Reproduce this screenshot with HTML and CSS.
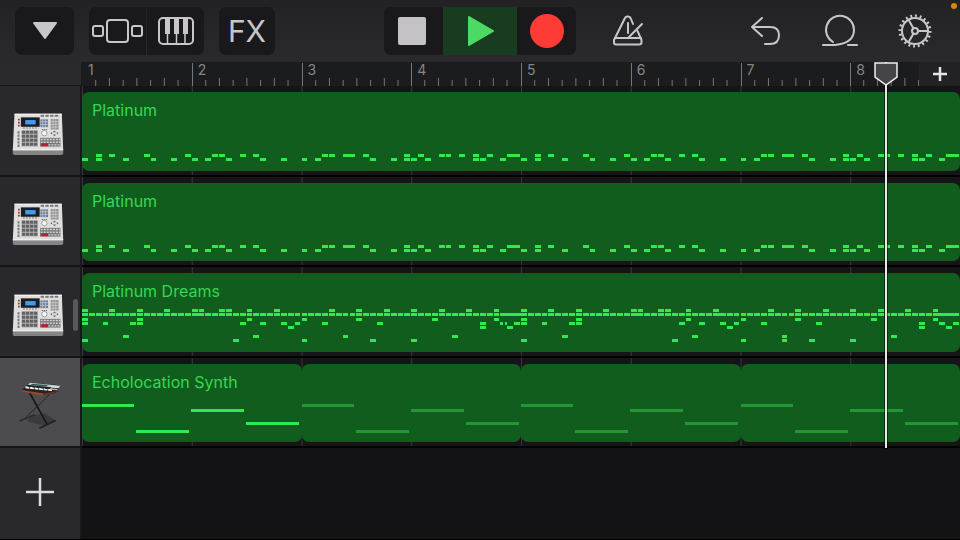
FILE: index.html
```html
<!DOCTYPE html>
<html lang="en">
<head>
    <meta charset="UTF-8">
    <meta name="viewport" content="width=device-width, initial-scale=1">
    <title>Tracks</title>
    <link rel="stylesheet" href="styles.css">
</head>
<body>
    <!-- shared track icon -->
    <svg class="symbols" aria-hidden="true">
        <symbol id="drum-machine" viewBox="36 70 154 128">
            <path d="M38 180H188V190Q188 195 183 195H43Q38 195 38 190Z" fill="#858585"/>
            <path d="M43 72H184L188 181H38Z" fill="#dededc"/>
            <path d="M43 72H184V75H43Z" fill="#f8f8f8"/>
            <path d="M38 178H188V181H38Z" fill="#f2f2f2"/>
            <rect x="62" y="83" width="56" height="28" fill="#1c1c20"/>
            <rect x="75" y="91" width="31" height="13" fill="#3f9cf5"/>
            <path d="M56 87V110" stroke="#8c3434" stroke-width="5" stroke-dasharray="5 4"/>
            <path d="M121 78H174" stroke="#77777a" stroke-width="6" stroke-dasharray="10 4"/>
            <rect x="120" y="89" width="23" height="23" fill="#6f7f96"/>
            <path d="M120 96H143M120 104H143M127 89V112M135 89V112" stroke="#c9d0da" stroke-width="2"/>
            <rect x="151" y="88" width="23" height="31" fill="#8d8d92"/>
            <path d="M151 96H174M151 104H174M151 112H174M158 88V119M166 88V119" stroke="#dadada" stroke-width="2"/>
            <path d="M68 115H114" stroke="#77777a" stroke-width="3" stroke-dasharray="6 3"/>
            <rect x="64" y="121" width="49" height="49" fill="#b4b4b4"/>
            <path d="M65 127H112M65 139H112M65 151H112M65 163H112" stroke="#626266" stroke-width="9" stroke-dasharray="10 2"/>
            <path d="M55 124V172" stroke="#77777a" stroke-width="6" stroke-dasharray="7 3"/>
            <circle cx="132" cy="130" r="8" fill="#f7f7f7" stroke="#77777a" stroke-width="2"/>
            <path d="M124 119H140" stroke="#77777a" stroke-width="3" stroke-dasharray="4 2"/>
            <path d="M162 122L167 127H157ZM162 139L167 134H157ZM150 130L155 126V134ZM174 130L169 126V134Z" fill="#68686c"/>
            <rect x="119" y="144" width="61" height="26" fill="#77777a"/>
            <path d="M121 149H180M121 157H180M144 165H180" stroke="#cfcfcf" stroke-width="4" stroke-dasharray="6 3"/>
            <rect x="123" y="160" width="20" height="9" fill="#b81f35"/>
        </symbol>
    </svg>

    <header class="toolbar">
        <div class="toolbar-left">
            <button class="tool tool-menu" aria-label="Browser">
                <svg width="26" height="20" viewBox="0 0 26 20"><path d="M2 2H24L13 17Z" fill="#c8c6c9" stroke="#c8c6c9" stroke-width="2" stroke-linejoin="round"/></svg>
            </button>
            <div class="tool-group">
                <button class="tool" aria-label="Sound browser">
                    <svg class="line-icon" width="52" height="26" viewBox="0 0 52 26"><rect x="15" y="2" width="21" height="22" rx="3"/><rect x="1" y="8" width="10" height="10" rx="2"/><rect x="40" y="8" width="10" height="10" rx="2"/></svg>
                </button>
                <button class="tool" aria-label="Instrument">
                    <svg class="line-icon" width="38" height="30" viewBox="0 0 38 30"><rect x="2" y="2" width="34" height="26" rx="4"/><path d="M10.5 17V28M19.5 17V28M28 17V28" stroke-width="1.5"/><path d="M8 2H13V18H8ZM17 2H22V18H17ZM26 2H31V18H26Z" fill="#c8c6c9" stroke="none"/></svg>
                </button>
            </div>
            <button class="tool tool-fx">FX</button>
        </div>

        <div class="transport">
            <button class="stop" aria-label="Stop"><span class="stop-shape"></span></button>
            <button class="play" aria-label="Play">
                <svg width="28" height="32" viewBox="0 0 28 32"><path d="M3 2L27 16L3 30Z" fill="#4cda64" stroke="#4cda64" stroke-width="2" stroke-linejoin="round"/></svg>
            </button>
            <button class="record" aria-label="Record"><span class="record-shape"></span></button>
        </div>

        <div class="toolbar-right">
            <button class="plain metronome" aria-label="Metronome">
                <svg class="line-icon" width="32" height="32" viewBox="0 0 32 32"><path d="M21 9L19 4Q18 1.500 16 1.500H15.500Q13.500 1.500 12.500 4L2 25V27.500Q2 29.500 4 29.500H27Q29.500 29.500 29.500 27.500V25L25.500 16"/><path d="M3 23H29M16 8V18M30 9L17 22"/></svg>
            </button>
            <div class="toolbar-end">
                <button class="plain" aria-label="Undo">
                    <svg class="line-icon" width="32" height="32" viewBox="0 0 32 32"><path d="M13 3L3 12L13 21M3 12H21Q30 12 30 20Q30 29 21 29H16"/></svg>
                </button>
                <button class="plain" aria-label="Loop browser">
                    <svg class="line-icon" width="36" height="34" viewBox="0 0 36 34"><path d="M1 31H13Q32 29 32 16A14 14 0 1 0 11 28M26 31H35"/></svg>
                </button>
                <button class="plain" aria-label="Settings">
                    <svg class="line-icon" width="36" height="36" viewBox="0 0 36 36"><circle cx="18" cy="18" r="13"/><circle cx="18" cy="18" r="15" pathLength="100" stroke-width="3" stroke-dasharray="2 3" stroke-linecap="butt"/><circle cx="18" cy="18" r="3"/><path d="M21 18H31M16.5 15.400L11.5 6.700M16.5 20.600L11.5 29.300"/></svg>
                </button>
            </div>
        </div>
        <span class="mic-dot"></span>
    </header>

    <main class="arrange">
        <div class="ruler-corner"></div>
        <div class="ruler">
            <div class="bars" id="bars"></div>
            <button class="add-section" aria-label="Add section">
                <svg width="16" height="16" viewBox="0 0 16 16"><path d="M8 1V15M1 8H15" stroke="#e4e4e6" stroke-width="2.5"/></svg>
            </button>
        </div>

        <button class="track-head" aria-label="Platinum"><svg class="drum-icon"><use href="#drum-machine"/></svg></button>
        <div class="lane">
            <section class="region"><h2>Platinum</h2><svg class="notes" data-part="platinum" data-steps="128"></svg></section>
        </div>

        <button class="track-head" aria-label="Platinum"><svg class="drum-icon"><use href="#drum-machine"/></svg></button>
        <div class="lane">
            <section class="region"><h2>Platinum</h2><svg class="notes" data-part="platinum" data-steps="128"></svg></section>
        </div>

        <button class="track-head" aria-label="Platinum Dreams"><svg class="drum-icon"><use href="#drum-machine"/></svg><span class="drag-handle"></span></button>
        <div class="lane">
            <section class="region"><h2>Platinum Dreams</h2><svg class="notes" data-part="dreams" data-steps="128"></svg></section>
        </div>

        <button class="track-head selected" aria-label="Echolocation Synth">
            <svg class="synth-icon" viewBox="50 334 132 148">
                <path d="M84 440L132 432L166 454L130 470L80 458Z" fill="#3b3b3f"/>
                <path d="M147 374L72 447" stroke="#242427" stroke-width="3"/>
                <path d="M54 456L102 436" stroke="#29292c" stroke-width="4"/>
                <path d="M83 364L139 465" stroke="#151517" stroke-width="5"/>
                <path d="M116 478L166 454" stroke="#202023" stroke-width="5"/>
                <path d="M62 360L87 338L180 346L166 370L128 376Z" fill="#242427"/>
                <path d="M63 361L130 371L127 378L63 366Z" fill="#9b4626"/>
                <path d="M131 371L164 364L177 360L174 366L129 378Z" fill="#6f321f"/>
                <path d="M87 338L180 347L175 354L80 344Z" fill="#c4d0ce"/>
                <path d="M93 341L141 345L137 350L89 345Z" fill="#35575a"/>
                <path d="M73 352L156 361" stroke="#f0f0f0" stroke-width="6" stroke-dasharray="12 2"/>
                <path d="M81 349L159 357" stroke="#202023" stroke-width="4" stroke-dasharray="8 5"/>
                <path d="M151 351L174 353M148 357L171 359" stroke="#eee" stroke-width="3"/>
            </svg>
        </button>
        <div class="lane">
            <section class="region"><h2>Echolocation Synth</h2><svg class="notes" data-part="echo" data-steps="32"></svg></section>
            <section class="region looped"><svg class="notes" data-part="echo" data-steps="32"></svg></section>
            <section class="region looped"><svg class="notes" data-part="echo" data-steps="32"></svg></section>
            <section class="region looped"><svg class="notes" data-part="echo" data-steps="32"></svg></section>
        </div>

        <button class="track-head add-track" aria-label="Add track">
            <svg width="30" height="30" viewBox="0 0 30 30"><path d="M15 1V29M1 15H29" stroke="#dcdcde" stroke-width="2.5"/></svg>
        </button>
        <div class="empty"></div>

        <div class="playhead">
            <svg width="24" height="24" viewBox="0 0 24 24"><path d="M1 1H23V15L12 23L1 15Z" fill="#454548" stroke="#eee" stroke-width="1.5"/></svg>
        </div>
    </main>

    <script src="script.js"></script>
</body>
</html>
```

FILE: styles.css
```css
* {
    box-sizing: border-box;
}

body {
    margin: 0;
    min-height: 100vh;
    display: flex;
    flex-direction: column;
    background-color: #000;
    font-family: Inter, "Liberation Sans", sans-serif;
    padding-bottom: 1px;
}

button {
    display: flex;
    align-items: center;
    justify-content: center;
    margin: 0;
    padding: 0;
    border: none;
    background: none;
    color: inherit;
    font-family: inherit;
    cursor: pointer;
}

.symbols {
    position: absolute;
    width: 0;
    height: 0;
}

.line-icon {
    fill: none;
    stroke: #c8c6c9;
    stroke-width: 2;
    stroke-linecap: round;
    stroke-linejoin: round;
}

/* toolbar */

.toolbar {
    position: relative;
    display: grid;
    grid-template-columns: 1fr auto 1fr;
    align-items: center;
    height: 62px;
    background: linear-gradient(#222224, #2a2a2d);
}

.toolbar-left {
    display: flex;
    gap: 15px;
    padding-left: 15px;
}

.tool {
    width: 57px;
    height: 48px;
    background-color: #19191b;
}

.tool-menu {
    width: 59px;
    border-radius: 7px;
}

.tool-group {
    display: flex;
    gap: 1px;
    border-radius: 7px;
    overflow: hidden;
}

.tool-fx {
    width: 56px;
    border-radius: 7px;
    color: #c8c6c9;
    font-size: 30px;
    font-weight: 400;
}

.transport {
    display: flex;
    height: 48px;
    border-radius: 7px;
    overflow: hidden;
    background-color: #19191b;
}

.stop, .record {
    width: 59px;
}

.play {
    width: 74px;
    background-color: #193c20;
}

.stop-shape {
    width: 28px;
    height: 28px;
    margin-right: 4px;
    border-radius: 2px;
    background-color: #c5c2c6;
}

.record-shape {
    width: 34px;
    height: 34px;
    border-radius: 50%;
    background-color: #ff3b35;
}

.toolbar-right, .toolbar-end {
    display: flex;
}

.toolbar-right {
    justify-content: space-between;
    padding: 0 25px 0 32px;
}

.toolbar-end {
    gap: 35px;
}

.plain {
    width: 40px;
    height: 48px;
}

.mic-dot {
    position: absolute;
    top: 3px;
    right: 3px;
    width: 6px;
    height: 6px;
    border-radius: 50%;
    background-color: #d9860c;
}

/* ruler and tracks */

.arrange {
    position: relative;
    flex: 1;
    display: grid;
    grid-template-columns: 82px 1fr;
    grid-template-rows: 24px repeat(5, minmax(90px, 1fr));
    overflow: hidden;
}

.ruler-corner {
    background-color: #2a2a2c;
    border-right: 1px solid #1b1c1e;
    border-bottom: 1px solid #151517;
}

.ruler {
    display: grid;
    background-color: #1b1c1e;
}

.bars, .add-section {
    grid-area: 1 / 1;
}

.bars {
    display: grid;
    grid-template-columns: repeat(8, 1fr);
}

.bar {
    display: grid;
    color: #858587;
    font-size: 14px;
    line-height: 16px;
}

.bar span, .bar svg {
    grid-area: 1 / 1;
}

.bar span {
    padding-left: 6px;
}

.bar svg {
    width: 100%;
    height: 24px;
}

.bar line {
    stroke: #77777a;
}

.bar:first-child .bar-line {
    display: none;
}

.add-section {
    justify-self: end;
    width: 41px;
    background-color: #222224;
    z-index: 1;
}

.track-head {
    position: relative;
    padding: 8px 4px 0 0;
    background-color: #29292d;
    border-right: 2px solid #18181b;
    border-bottom: 2px solid #151517;
}

.selected {
    padding: 6px 2px 0 0;
    background-color: #4b4b50;
}

.add-track {
    padding: 0 0 4px;
    border-bottom: none;
}

.drum-icon {
    width: 52px;
    height: 43px;
}

.synth-icon {
    width: 43px;
    height: 49px;
}

.drag-handle {
    position: absolute;
    right: 2px;
    width: 5px;
    height: 32px;
    border-radius: 3px;
    background-color: #58585c;
}

.lane {
    display: flex;
    padding: 6px 0 4px;
    border-bottom: 2px solid #000;
    background-color: #151518;
    background-image: linear-gradient(to right, #39393d 1px, transparent 1px);
    background-size: 12.5% 100%;
}

.region {
    position: relative;
    flex: 1;
    min-width: 0;
    border-radius: 7px;
    overflow: hidden;
    background-color: #115d1d;
}

.region h2 {
    margin: 0;
    padding: 8px 10px;
    color: #34d855;
    font-size: 16px;
    font-weight: 400;
    line-height: 20px;
}

.notes {
    position: absolute;
    top: 0;
    left: 0;
    width: 100%;
    height: 100%;
    fill: #31e94f;
    shape-rendering: crispEdges;
}

.looped .notes {
    fill: #239736;
}

.empty {
    background-color: #131316;
}

.playhead {
    position: absolute;
    grid-column: 2;
    grid-row: 1 / 6;
    top: 0;
    bottom: 0;
    left: 91.5%;
    z-index: 2;
    width: 2px;
    background-color: #e8e8e8;
    box-shadow: 0 0 0 1px rgba(0, 0, 0, 0.5);
}

.playhead svg {
    display: block;
    margin-left: -11px;
}
```

FILE: script.js
```js
// y of each pitch row inside a region
const rowY = [36, 40, 45, 49, 53, 58, 62, 66];

// step numbers for each row, [step, length] for longer notes
const parts = {
    platinum: {
        6: [2, 4, 9, 15, 19, 20, 23, 25, 35, 36, [38, 2], 41, 47, 49, 52, 53, 55, 57, 59, [62, 2], 66, 68, 73, 79, 83, 84, 87, 89, 99, 100, [102, 2], 105, 111, 113, 116, 117, 119, 121, 123, [126, 2]],
        7: [0, 2, 6, 10, 13, 16, 18, 21, 26, 29, 32, 34, 42, 45, 47, 48, 50, 57, 58, 61, 64, 66, 70, 74, 77, 80, 82, 85, 90, 93, 96, 98, 106, 109, 111, 112, 114, 121, 122, 125]
    },
    dreams: {
        0: [0, 4, 8, 12, 16, 17, 20, 21, 24, 28, 36, 40, 44, 48, 52, 56, 60, 64, 68, 72, 76, 80, 81, 84, 85, 88, 92, 100, 104, 108, 112, 116, 120, 124],
        1: [],
        2: [0, 8, 24, 32, 40, 51, 60, 64, 72, 88, 96, 104, 115, 124],
        3: [0, 3, 7, 8, 23, 26, 29, 31, 35, 43, 58, [61, 0.5], [61.6, 0.5], 63, 64, 67, 71, 72, 87, 90, 93, 95, 99, 107, 122, 125, 127],
        4: [30, 58, 62, 94, 122, 126],
        6: [6, 25, 38, 54, 70, 89, 102, 118],
        7: [0, 22, 32, 42, 48, 64, 86, 96, 102, 106, 112]
    },
    echo: {
        1: [[0, 7.8]],
        2: [[15.9, 7.9]],
        5: [[23.9, 7.9]],
        7: [[7.8, 7.9]]
    }
};

// the hi-hat row plays on every step, a few of them tied
const ties = { 16: 2, 61: 4, 80: 2, 92: 2, 124: 4 };
for (let step = 0; step < 128; step += ties[step] || 1) {
    parts.dreams[1].push(ties[step] ? [step, ties[step]] : step);
}

function renderNotes(svg) {
    const steps = Number(svg.dataset.steps);
    const part = parts[svg.dataset.part];
    let html = '';
    for (const row in part) {
        for (const note of part[row]) {
            const [start, length] = Array.isArray(note) ? note : [note, 1];
            const x = start / steps * 100;
            const width = Math.max(length - 0.15, 0.4) / steps * 100;
            html += `<rect x="${x}%" y="${rowY[row]}" width="${width}%" height="3"/>`;
        }
    }
    svg.innerHTML = html;
}

function renderBars() {
    let html = '';
    for (let bar = 1; bar <= 8; bar++) {
        let ticks = '<line class="bar-line" x1="0" x2="0" y1="1" y2="24" stroke-width="2"/>';
        for (let i = 1; i < 8; i++) {
            const x = i * 12.5;
            ticks += `<line x1="${x}%" x2="${x}%" y1="${i % 2 ? 18 : 16}" y2="24"/>`;
        }
        html += `<div class="bar"><span>${bar}</span><svg>${ticks}</svg></div>`;
    }
    document.getElementById('bars').innerHTML = html;
}

document.querySelectorAll('.notes').forEach(renderNotes);
renderBars();
```
